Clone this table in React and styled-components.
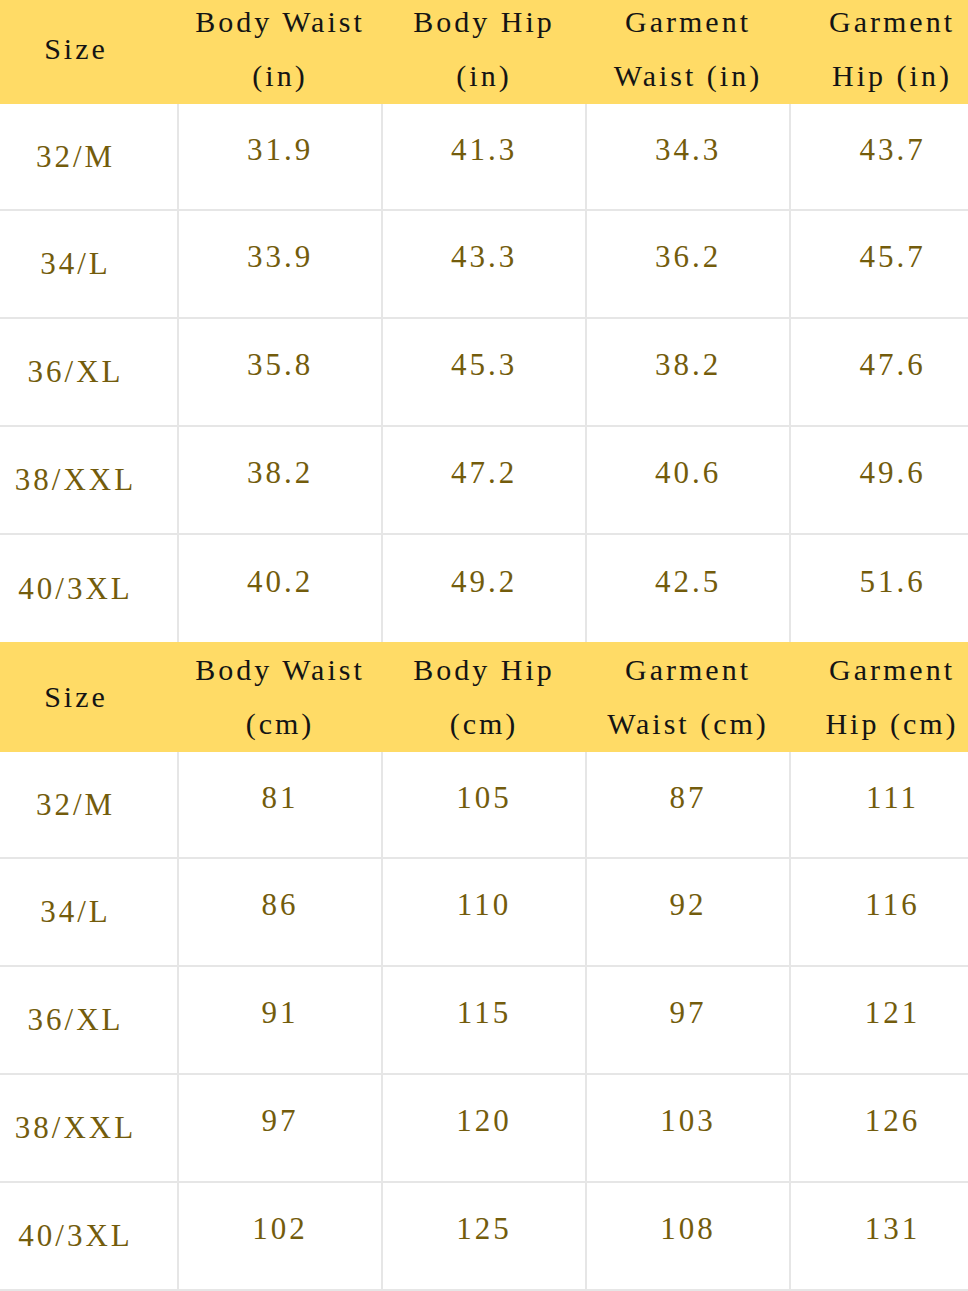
import styled, { createGlobalStyle } from 'styled-components';

const GlobalStyle = createGlobalStyle`
  html, body {
    margin: 0;
    padding: 0;
    background: #ffffff;
  }
  body {
    font-family: "Liberation Serif", "Times New Roman", serif;
  }
`;

const serif = `"Liberation Serif", "Times New Roman", serif`;

const Page = styled.div`
  width: 968px;
  height: 1291px;
  overflow: hidden;
  background: #ffffff;
`;

const Sheet = styled.div`
  display: flex;
  flex-direction: column;
  width: 1020px;
  margin-top: -6px;
  margin-left: -26px;
`;

const Table = styled.table`
  width: 1020px;
  border-collapse: collapse;
  table-layout: fixed;
  font-family: ${serif};
`;

const HeadRow = styled.tr`
  background: #ffdb66;
  height: 110px;
`;

const HeadCell = styled.th`
  width: 204px;
  padding: 0;
  font-family: ${serif};
  font-weight: 400;
  font-size: 30px;
  line-height: 54px;
  letter-spacing: 3px;
  color: #141414;
  text-align: center;
  vertical-align: middle;
`;

const Row = styled.tr`
  height: 108px;
  &:first-child {
    height: 106px;
  }
  &:last-child td {
    border-bottom: ${({ $last }) => ($last ? '2px solid #e6e6e6' : 'none')};
  }
`;

const Cell = styled.td`
  padding: 0 0 ${({ $size }) => ($size ? '0' : '14px')} 0;
  font-family: ${serif};
  font-size: 31px;
  letter-spacing: 3px;
  color: #735c0c;
  text-align: center;
  vertical-align: middle;
  border-bottom: 2px solid #e6e6e6;
  border-left: ${({ $size }) => ($size ? 'none' : '2px solid #e6e6e6')};
`;

const sizes = ['32/M', '34/L', '36/XL', '38/XXL', '40/3XL'];

const inches = [
  ['31.9', '41.3', '34.3', '43.7'],
  ['33.9', '43.3', '36.2', '45.7'],
  ['35.8', '45.3', '38.2', '47.6'],
  ['38.2', '47.2', '40.6', '49.6'],
  ['40.2', '49.2', '42.5', '51.6'],
];

const cms = [
  ['81', '105', '87', '111'],
  ['86', '110', '92', '116'],
  ['91', '115', '97', '121'],
  ['97', '120', '103', '126'],
  ['102', '125', '108', '131'],
];

function SizeTable({ unit, data, last }) {
  return (
    <Table>
      <thead>
        <HeadRow>
          <HeadCell>Size</HeadCell>
          <HeadCell>Body Waist<br />({unit})</HeadCell>
          <HeadCell>Body Hip<br />({unit})</HeadCell>
          <HeadCell>Garment<br />Waist ({unit})</HeadCell>
          <HeadCell>Garment<br />Hip ({unit})</HeadCell>
        </HeadRow>
      </thead>
      <tbody>
        {data.map((row, i) => (
          <Row key={sizes[i]} $last={last}>
            <Cell $size>{sizes[i]}</Cell>
            {row.map((v, j) => (
              <Cell key={j}>{v}</Cell>
            ))}
          </Row>
        ))}
      </tbody>
    </Table>
  );
}

export default function App() {
  return (
    <Page>
      <GlobalStyle />
      <Sheet>
        <SizeTable unit="in" data={inches} />
        <SizeTable unit="cm" data={cms} last />
      </Sheet>
    </Page>
  );
}
